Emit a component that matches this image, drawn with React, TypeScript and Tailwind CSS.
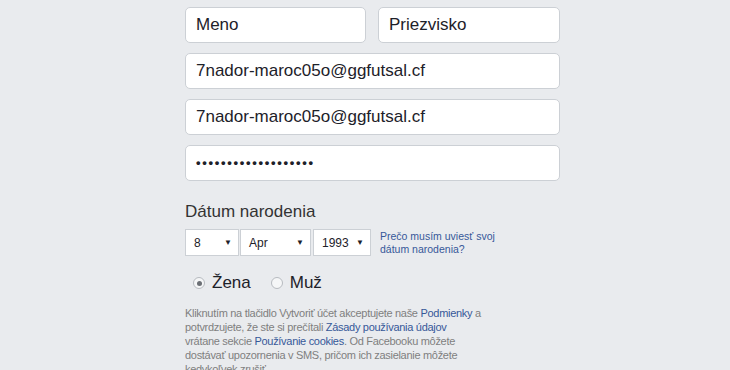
import React from "react";

const font = { fontFamily: "'Liberation Sans', Arial, sans-serif" };

function Field({ value, password }: { value: string; password?: boolean }) {
  return (
    <div className="h-[36px] w-full rounded-[5px] border border-[#ccd0d5] bg-white px-[10px] flex items-center text-[17px] text-[#1d2129]">
      {password ? (
        <span className="tracking-[1.7px] text-[13px] font-bold">{"•".repeat(19)}</span>
      ) : (
        <span>{value}</span>
      )}
    </div>
  );
}

function Select({ value, w }: { value: string; w: string }) {
  return (
    <div className={`h-[27px] ${w} border border-[#ccd0d5] bg-white flex items-center justify-between pl-[8px] pr-[6px] text-[12px] text-[#1d2129]`}>
      <span>{value}</span>
      <span className="text-[8px]">▼</span>
    </div>
  );
}

function Radio({ checked, label }: { checked?: boolean; label: string }) {
  return (
    <label className="flex items-center gap-[7px]">
      <span className="w-[12px] h-[12px] rounded-full border border-[#b7bbc0] bg-[#f5f6f7] flex items-center justify-center">
        {checked && <span className="w-[5px] h-[5px] rounded-full bg-[#6b6f75]" />}
      </span>
      <span className="text-[17px] text-[#1d2129]">{label}</span>
    </label>
  );
}

export default function App() {
  return (
    <main className="w-[730px] h-[370px] overflow-hidden bg-[#e9ebee]" style={font}>
      <div className="ml-[185px] w-[375px] pt-[7px]">
        <div className="flex gap-[12px]">
          <div className="w-[181px]">
            <Field value="Meno" />
          </div>
          <div className="flex-1">
            <Field value="Priezvisko" />
          </div>
        </div>
        <div className="mt-[10px]">
          <Field value="7nador-maroc05o@ggfutsal.cf" />
        </div>
        <div className="mt-[10px]">
          <Field value="7nador-maroc05o@ggfutsal.cf" />
        </div>
        <div className="mt-[10px]">
          <Field value="" password />
        </div>

        <div className="mt-[20px] text-[17px] leading-[22px] text-[#333]">Dátum narodenia</div>
        <div className="mt-[6px] flex items-center">
          <Select value="8" w="w-[54px]" />
          <div className="ml-[1px]">
            <Select value="Apr" w="w-[71px]" />
          </div>
          <div className="ml-[2px]">
            <Select value="1993" w="w-[58px]" />
          </div>
          <a className="ml-[9px] text-[10.5px] leading-[13px] text-[#365899]">
            Prečo musím uviesť svoj
            <br />
            dátum narodenia?
          </a>
        </div>

        <div className="mt-[16px] ml-[8px] flex items-center gap-[20px] h-[22px]">
          <Radio checked label="Žena" />
          <Radio label="Muž" />
        </div>

        <p className="mt-[12px] whitespace-nowrap text-[11px] tracking-[-0.3px] leading-[14px] text-[#7f7f7f]">
          Kliknutím na tlačidlo Vytvoriť účet akceptujete naše{" "}
          <a className="text-[#365899]">Podmienky</a> a
          <br />
          potvrdzujete, že ste si prečítali{" "}
          <a className="text-[#365899]">Zásady používania údajov</a>
          <br />
          vrátane sekcie <a className="text-[#365899]">Používanie cookies</a>. Od Facebooku môžete
          <br />
          dostávať upozornenia v SMS, pričom ich zasielanie môžete
          <br />
          kedykoľvek zrušiť.
        </p>
      </div>
    </main>
  );
}
